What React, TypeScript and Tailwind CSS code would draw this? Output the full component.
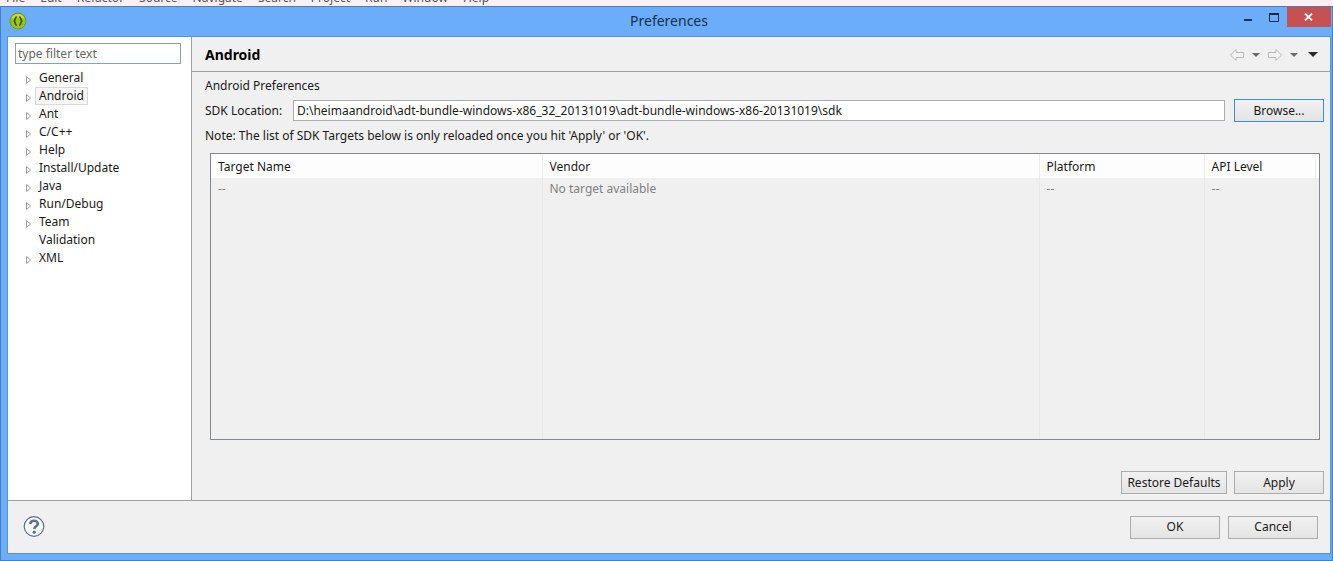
import React, { useState } from 'react';

const menuItems = ['File', 'Edit', 'Refactor', 'Source', 'Navigate', 'Search', 'Project', 'Run', 'Window', 'Help'];

const pages = [
  { name: 'General', expandable: true },
  { name: 'Android', expandable: true },
  { name: 'Ant', expandable: true },
  { name: 'C/C++', expandable: true },
  { name: 'Help', expandable: true },
  { name: 'Install/Update', expandable: true },
  { name: 'Java', expandable: true },
  { name: 'Run/Debug', expandable: true },
  { name: 'Team', expandable: true },
  { name: 'Validation', expandable: false },
  { name: 'XML', expandable: true },
];

const columns = ['Target Name', 'Vendor', 'Platform', 'API Level'];
const targets = [['--', 'No target available', '--', '--']];

const AppIcon = () => (
  <svg width="18" height="18" viewBox="0 0 18 18" aria-hidden="true">
    <circle cx="9" cy="9" r="8" fill="#9cc414" stroke="#6d9a1c" />
    <path d="M2.5 7a6.8 6.8 0 0 1 13 0c-3-2-10-2-13 0z" fill="#c9e24c" />
    <path
      d="M7.8 4.500C5.800 5 6.500 7.500 5.300 9C6.500 10.500 5.800 13 7.800 13.500M10.200 4.500C12.200 5 11.500 7.500 12.700 9C11.500 10.500 12.200 13 10.200 13.500"
      fill="none"
      stroke="#46540c"
      strokeWidth="1.800"
    />
  </svg>
);

const ArrowIcon = ({ flipped = false }: { flipped?: boolean }) => (
  <svg width="16" height="14" viewBox="0 0 16 14" className={flipped ? 'rotate-180' : ''} aria-hidden="true">
    <path d="M1.500 7L7 1.500V4.500H14.500V9.500H7V12.500z" fill="#f3f3f3" stroke="#b9b9b9" strokeLinejoin="round" />
  </svg>
);

const DropIcon = ({ dark = false }: { dark?: boolean }) => (
  <svg width={dark ? 10 : 8} height={dark ? 5 : 4} viewBox="0 0 8 4" preserveAspectRatio="none" aria-hidden="true">
    <path d="M0 0H8L4 4z" fill={dark ? '#2a2a2a' : '#6b6b6b'} />
  </svg>
);

const PushButton = ({ label, className }: { label: string; className: string }) => (
  <button
    type="button"
    className={`h-[23px] border bg-linear-to-b from-[#f1f1f1] to-[#e4e4e4] text-center leading-5 ${className}`}
  >
    {label}
  </button>
);

const App: React.FC = () => {
  const [selected, setSelected] = useState<string>('Android');
  const [filter, setFilter] = useState<string>('');
  const [location, setLocation] = useState<string>(
    'D:\\heimaandroid\\adt-bundle-windows-x86_32_20131019\\adt-bundle-windows-x86-20131019\\sdk'
  );

  return (
    <div className="flex min-h-screen flex-col bg-[#fbf0f3] font-['Noto_Sans',sans-serif] text-[12px] leading-4 text-[#1a1a1a]">
      <nav className="flex h-[6px] items-end gap-[15px] overflow-hidden pl-[6px] text-[#555]">
        {menuItems.map((item) => (
          <button key={item} type="button" className="leading-4">
            {item}
          </button>
        ))}
      </nav>

      <section className="flex flex-1 flex-col border border-[#4a7fb5] bg-[#6badf8] pr-px pb-[6px] pl-[6px]">
        <header className="flex h-[29px] items-start">
          <div className="flex w-24 pt-[5px] pl-[2px]">
            <AppIcon />
          </div>
          <h1 className="flex-1 pt-1 text-center text-[14px] leading-5 text-[#15304f]">Preferences</h1>
          <div className="flex w-24 justify-end">
            <button type="button" aria-label="Minimize" className="flex h-5 w-[27px] items-center justify-center">
              <svg width="8" height="8" aria-hidden="true">
                <path d="M0 7H8" stroke="#17375c" strokeWidth="2" />
              </svg>
            </button>
            <button type="button" aria-label="Maximize" className="flex h-5 w-[26px] items-center justify-center">
              <svg width="10" height="9" aria-hidden="true">
                <path d="M.5 1V8.500H9.500V1" fill="none" stroke="#17273c" />
                <path d="M0 1H10" stroke="#17273c" strokeWidth="2" />
              </svg>
            </button>
            <button type="button" aria-label="Close" className="flex h-5 w-[45px] items-center justify-center bg-[#c75050]">
              <svg width="9" height="8" aria-hidden="true">
                <path d="M1 .5L8 7.500M8 .5L1 7.500" stroke="#fff" strokeWidth="1.800" />
              </svg>
            </button>
          </div>
        </header>

        <div className="flex flex-1 flex-col border border-[#5b93cc] bg-[#f0f0f0]">
          <div className="flex flex-1">
            <aside className="w-[184px] border-r border-[#a0a0a0] bg-white pt-[6px] pl-[7px]">
              <input
                type="text"
                aria-label="Filter preferences"
                placeholder="type filter text"
                value={filter}
                onChange={(e) => setFilter(e.target.value)}
                className="block h-[21px] w-[166px] border border-[#8ba0ad] bg-white px-[2px] placeholder:text-[#666]"
              />
              <ul className="mt-[5px]">
                {pages.map((page) => (
                  <li key={page.name} className="flex h-[18px] items-center">
                    <span className="flex w-5 justify-end pt-[3px] pr-px">
                      {page.expandable && (
                        <svg width="10" height="10" viewBox="0 0 10 10" aria-hidden="true">
                          <path d="M2.500 1.500L6.500 5L2.500 8.500z" fill="#fff" stroke="#a0a0a0" />
                        </svg>
                      )}
                    </span>
                    <button
                      type="button"
                      onClick={() => setSelected(page.name)}
                      className={`h-[18px] border px-[3px] leading-4 ${
                        selected === page.name ? 'border-[#dadada] bg-[#f7f7f7]' : 'border-transparent'
                      }`}
                    >
                      {page.name}
                    </button>
                  </li>
                ))}
              </ul>
            </aside>

            <main className="flex flex-1 flex-col">
              <div className="flex h-[35px] items-center justify-between border-b border-[#a0a0a0] pt-px pr-3 pl-[13px]">
                <h2 className="text-[14px] font-bold text-black">Android</h2>
                <div className="flex items-center gap-[7px]">
                  <button type="button" aria-label="Back"><ArrowIcon /></button>
                  <button type="button" aria-label="Back history"><DropIcon /></button>
                  <button type="button" aria-label="Forward"><ArrowIcon flipped /></button>
                  <button type="button" aria-label="Forward history"><DropIcon /></button>
                  <button type="button" aria-label="View menu" className="pl-[3px]"><DropIcon dark /></button>
                </div>
              </div>

              <div className="flex flex-1 flex-col px-[6px] pt-[6px] pb-[6px]">
                <p className="pl-[7px]">Android Preferences</p>
                <div className="mt-[5px] flex items-center pl-[7px]">
                  <label htmlFor="sdk-location" className="w-[88px]">SDK Location:</label>
                  <input
                    id="sdk-location"
                    type="text"
                    value={location}
                    onChange={(e) => setLocation(e.target.value)}
                    className="h-[21px] flex-1 border border-[#abadb3] bg-white px-[3px]"
                  />
                  <PushButton label="Browse..." className="ml-[9px] w-[90px] border-[#3c8fe0]" />
                </div>
                <p className="mt-[6px] pl-[7px]">
                  Note: The list of SDK Targets below is only reloaded once you hit 'Apply' or 'OK'.
                </p>

                <div className="mt-[9px] mr-1 ml-3 flex flex-1 border border-[#828790]">
                  <table className="w-full table-fixed border-collapse text-left">
                    <colgroup>
                      <col className="w-[331px]" />
                      <col />
                      <col className="w-[165px]" />
                      <col className="w-[111px]" />
                    </colgroup>
                    <thead>
                      <tr className="h-6 bg-[#fdfdfd]">
                        {columns.map((column) => (
                          <th key={column} className="border-r border-[#ececec] px-[7px] pt-[2px] font-normal last:border-r-0">
                            {column}
                          </th>
                        ))}
                      </tr>
                    </thead>
                    <tbody className="text-[#808080]">
                      {targets.map((row, i) => (
                        <tr key={i} className="h-[21px]">
                          {row.map((cell, j) => (
                            <td key={j} className="border-r border-[#e9e9e9] px-[7px] last:border-r-0">
                              {cell}
                            </td>
                          ))}
                        </tr>
                      ))}
                      <tr>
                        {columns.map((column) => (
                          <td key={column} className="border-r border-[#e9e9e9] last:border-r-0" />
                        ))}
                      </tr>
                    </tbody>
                  </table>
                  <div className="w-1 border-l border-[#e9e9e9]">
                    <div className="h-6 bg-[#fdfdfd]" />
                  </div>
                </div>

                <div className="mt-[31px] flex justify-end gap-[7px]">
                  <PushButton label="Restore Defaults" className="w-[106px] border-[#acacac]" />
                  <PushButton label="Apply" className="w-[90px] border-[#acacac]" />
                </div>
              </div>
            </main>
          </div>

          <footer className="flex h-[53px] items-center justify-between border-t border-[#a0a0a0] pr-3 pl-[15px]">
            <button type="button" aria-label="Help">
              <svg width="22" height="22" viewBox="0 0 22 22" aria-hidden="true">
                <circle cx="11" cy="10.500" r="9.800" fill="#f6f8fc" stroke="#5b6f8e" strokeWidth="1.200" />
                <path
                  d="M7.300 8.100C7.300 3.700 14.800 3.700 14.800 7.700C14.800 10.200 11.300 10.200 11.300 13"
                  fill="none"
                  stroke="#5d7192"
                  strokeWidth="2.600"
                />
                <circle cx="11.200" cy="16.200" r="1.600" fill="#5d7192" />
              </svg>
            </button>
            <div className="flex gap-2">
              <PushButton label="OK" className="w-[90px] border-[#acacac]" />
              <PushButton label="Cancel" className="w-[90px] border-[#acacac]" />
            </div>
          </footer>
        </div>
      </section>
    </div>
  );
};

export default App;
